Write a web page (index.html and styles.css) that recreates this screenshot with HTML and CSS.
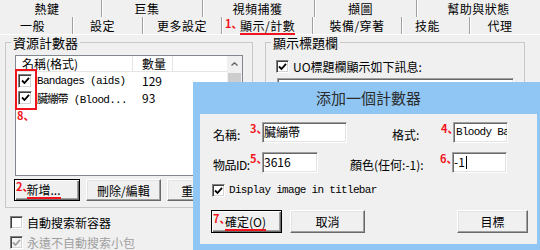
FILE: index.html
```html
<!DOCTYPE html>
<html lang="zh-Hant">
<head>
    <meta charset="UTF-8">
    <meta name="viewport" content="width=device-width, initial-scale=1.0">
    <title>資源計數器</title>
    <link rel="stylesheet" href="styles.css">
</head>
<body>
    <div class="tab-row back">
        <div class="tab t-hotkey">熱鍵</div>
        <div class="tab t-macro">巨集</div>
        <div class="tab t-video">視頻捕獲</div>
        <div class="tab t-shot">擷圖</div>
        <div class="tab t-help">幫助與狀態</div>
    </div>
    <div class="tab-row front">
        <div class="tab t-general">一般</div>
        <div class="tab t-settings">設定</div>
        <div class="tab t-more">更多設定</div>
        <div class="tab t-display"><span class="mark m-tab">1<span class="dun">、</span></span><span class="hl">顯示/計數</span></div>
        <div class="tab t-equip">裝備/穿著</div>
        <div class="tab t-skills">技能</div>
        <div class="tab t-agents">代理</div>
    </div>

    <div class="panel">
        <div class="groups">
            <fieldset class="group counters">
                <legend>資源計數器</legend>
                <div class="group-body">
                    <div class="list">
                        <div class="list-main">
                            <div class="list-head">
                                <span class="col-name">名稱(格式)</span>
                                <span class="col-qty">數量</span>
                            </div>
                            <div class="list-row">
                                <span class="col-name">
                                    <span class="box box-list"><svg viewBox="0 0 9 9" width="9" height="9"><polyline points="1,4.5 3.5,7 8,1.8" /></svg></span>
                                    <span class="mono">Bandages (aids)</span>
                                </span>
                                <span class="col-qty">129</span>
                            </div>
                            <div class="list-row">
                                <span class="col-name">
                                    <span class="box box-list"><svg viewBox="0 0 9 9" width="9" height="9"><polyline points="1,4.5 3.5,7 8,1.8" /></svg></span>
                                    <span class="mono">臟繃帶 (Blood...</span>
                                </span>
                                <span class="col-qty">93</span>
                            </div>
                            <div class="mark list-mark">8<span class="dun">、</span></div>
                        </div>
                        <div class="scrollbar">
                            <div class="sb-up"><svg viewBox="0 0 7 4" width="7" height="4"><polyline points="0.5,3.5 3.5,0.8 6.5,3.5" /></svg></div>
                            <div class="sb-thumb"></div>
                        </div>
                        <div class="mark-box"></div>
                    </div>
                    <div class="btn-row">
                        <button class="btn default btn-add"><span class="mark m-btn">2<span class="dun">、</span></span><span class="hl">新增...</span></button>
                        <button class="btn btn-edit">刪除/編輯</button>
                        <button class="btn btn-reset">重設</button>
                    </div>
                </div>
            </fieldset>

            <fieldset class="group titlebar">
                <legend>顯示標題欄</legend>
                <div class="group-body">
                    <div class="check-row">
                        <span class="box"><svg viewBox="0 0 9 9" width="9" height="9"><polyline points="1,4.5 3.5,7 8,1.8" /></svg></span>
                        <span>UO標題欄顯示如下訊息:</span>
                    </div>
                    <div class="field field-title"></div>
                </div>
            </fieldset>
        </div>

        <div class="options">
            <div class="check-row">
                <span class="box"></span>
                <span>自動搜索新容器</span>
            </div>
            <div class="check-row disabled">
                <span class="box"><svg viewBox="0 0 9 9" width="9" height="9"><polyline points="1,4.5 3.5,7 8,1.8" /></svg></span>
                <span>永遠不自動搜索小包</span>
            </div>
        </div>
    </div>

    <div class="dialog">
        <div class="dialog-title">添加一個計數器</div>
        <div class="dialog-body">
            <div class="form-row">
                <span class="lbl lbl-a">名稱:</span>
                <span class="mark m-field">3<span class="dun">、</span></span>
                <div class="field field-name">臟繃帶</div>
                <span class="lbl lbl-format">格式:</span>
                <span class="mark m-field2">4<span class="dun">、</span></span>
                <div class="field field-format mono">Bloody Bandages</div>
            </div>
            <div class="form-row">
                <span class="lbl lbl-a tight">物品ID:</span>
                <span class="mark m-field">5<span class="dun">、</span></span>
                <div class="field field-id">3616</div>
                <span class="lbl lbl-color">顏色(任何:-1):</span>
                <span class="mark m-field2">6<span class="dun">、</span></span>
                <div class="field field-color">-1<span class="caret"></span></div>
            </div>
            <div class="check-row dlg-check">
                <span class="box"><svg viewBox="0 0 9 9" width="9" height="9"><polyline points="1,4.5 3.5,7 8,1.8" /></svg></span>
                <span class="mono">Display image in titlebar</span>
            </div>
            <div class="dlg-buttons">
                <button class="btn default btn-ok"><span class="mark m-btn2">7<span class="dun">、</span></span><span class="hl">確定(O)</span></button>
                <button class="btn btn-cancel">取消</button>
                <button class="btn btn-target">目標</button>
            </div>
        </div>
    </div>
</body>
</html>
```

FILE: styles.css
```css
body {
    margin: 0;
    width: 540px;
    height: 250px;
    overflow: hidden;
    position: relative;
    background-color: #f0f0f0;
    font-family: "Noto Sans CJK TC", "Noto Sans", sans-serif;
    font-size: 12px;
    color: #000;
}
.mono {
    font-family: "Liberation Mono", "Noto Sans CJK TC", monospace;
    font-size: 11px;
    letter-spacing: -0.7px;
}

/* tabs */
.tab-row {
    display: flex;
    height: 17px;
    padding-left: 3px;
}
.tab {
    box-sizing: border-box;
    padding-right: 10px;
    text-align: center;
    line-height: 17px;
    letter-spacing: 0.5px;
    white-space: nowrap;
    border-right: 1px solid #a0a0a0;
    box-shadow: 1px 0 0 #fff;
}
.t-hotkey { width: 99px; }
.t-macro { width: 101px; }
.t-video { width: 112px; padding-right: 2px; }
.t-shot { width: 102px; }
.t-help { flex: 1; border-right: none; box-shadow: none; padding-right: 0; }
.t-general { width: 70px; }
.t-settings { width: 70px; }
.t-more { width: 79px; padding-right: 0; }
.t-display { width: 91px; text-align: left; padding-left: 3px; }
.t-equip { width: 89px; padding-right: 0; }
.t-skills { width: 68px; padding-right: 16px; }
.t-agents { flex: 1; border-right: none; box-shadow: none; }

/* red step numbers */
.mark {
    display: inline-block;
    color: #f2141c;
    font-family: "Noto Sans CJK SC", "Noto Sans CJK JP", sans-serif;
    font-weight: bold;
    font-size: 11px;
    line-height: 11px;
    white-space: nowrap;
    letter-spacing: 0;
}
.dun {
    letter-spacing: -7px;
}
.hl {
    display: inline-block;
    line-height: 14px;
    border-bottom: 2px solid #f2141c;
}
.m-tab {
    width: 15px;
    vertical-align: 3px;
}

/* panel and group boxes */
.panel {
    border-top: 1px solid #fff;
}
.groups {
    display: flex;
    padding-left: 5px;
}
.group {
    margin: 0;
    padding: 0;
    min-width: 0;
    box-sizing: border-box;
    border: 1px solid #c8c8c8;
}
.group legend {
    margin-left: 5px;
    padding: 0 2px;
    font-size: 13px;
    line-height: 15px;
}
.counters {
    width: 248px;
}
.counters .group-body {
    padding: 5px 9px 6px 9px;
}
.titlebar {
    width: 260px;
    margin-left: 12px;
}
.titlebar .group-body {
    padding: 7px 10px 0 10px;
}

/* list view */
.list {
    position: relative;
    display: flex;
    height: 121px;
    box-sizing: border-box;
    border: 1px solid #828790;
    background-color: #fff;
}
.list-main {
    flex: 1;
}
.list-head {
    display: flex;
    height: 15px;
    line-height: 15px;
    border-bottom: 1px solid #e5e5e5;
}
.list-head .col-name {
    padding-left: 6px;
    border-right: 1px solid #e5e5e5;
}
.list-head .col-qty {
    border-right: 1px solid #e5e5e5;
}
.col-name {
    box-sizing: border-box;
    width: 117px;
    display: flex;
    align-items: center;
    white-space: nowrap;
}
.col-qty {
    box-sizing: border-box;
    width: 40px;
    padding-left: 9px;
}
.list-row {
    display: flex;
    align-items: center;
    height: 17px;
}
.list-row .col-name {
    padding-left: 2px;
}
.list-row .box {
    margin-right: 5px;
}
.list-mark {
    margin: 3px 0 0 1px;
}
.mark-box {
    position: absolute;
    left: -1px;
    top: 13px;
    width: 22px;
    height: 41px;
    box-sizing: border-box;
    border: 2px solid #f2141c;
}
.scrollbar {
    width: 15px;
    background-color: #f0f0f0;
}
.sb-up {
    height: 16px;
    display: flex;
    align-items: center;
    justify-content: center;
    background-color: #f0f0f0;
}
.sb-up polyline {
    fill: none;
    stroke: #606060;
    stroke-width: 1.3;
}
.sb-thumb {
    margin: 1px 1px 0 1px;
    height: 80px;
    background-color: #cdcdcd;
}

/* checkboxes */
.box {
    flex: none;
    display: inline-flex;
    align-items: center;
    justify-content: center;
    width: 13px;
    height: 13px;
    box-sizing: border-box;
    background-color: #fff;
    border: 1px solid;
    border-color: #808080 #fff #fff #808080;
    box-shadow: inset 1px 1px 0 #404040, inset -1px -1px 0 #d4d4d4;
}
.box-list {
    width: 14px;
    height: 14px;
}
.box polyline {
    fill: none;
    stroke: #000;
    stroke-width: 1.8;
}
.check-row {
    display: flex;
    align-items: center;
    gap: 4px;
    height: 18px;
    white-space: nowrap;
}
.check-row.disabled {
    color: #a0a0a0;
}
.check-row.disabled .box {
    background-color: #f4f4f4;
}
.check-row.disabled polyline {
    stroke: #a0a0a0;
}
.options {
    padding: 4px 0 0 10px;
}
.options .check-row {
    height: 20px;
}

/* fields */
.field {
    flex: none;
    height: 21px;
    box-sizing: border-box;
    padding-left: 1px;
    line-height: 18px;
    overflow: hidden;
    white-space: nowrap;
    background-color: #fff;
    border: 1px solid;
    border-color: #a0a0a0 #fff #fff #a0a0a0;
    box-shadow: inset 1px 1px 0 #696969, inset -1px -1px 0 #e3e3e3;
}
.field-title {
    width: 237px;
    height: 22px;
    margin: 3px 0 0 1px;
}
.caret {
    display: inline-block;
    width: 1px;
    height: 13px;
    margin-left: 1px;
    vertical-align: -2px;
    background-color: #000;
}

/* buttons */
.btn {
    box-sizing: border-box;
    height: 22px;
    padding: 0;
    font-family: inherit;
    font-size: 12px;
    color: #000;
    background-color: #f0f0f0;
    border: 1px solid;
    border-color: #fff #696969 #696969 #fff;
    box-shadow: inset -1px -1px 0 #a0a0a0, inset 1px 1px 0 #e3e3e3;
    white-space: nowrap;
}
.btn.default {
    border: 1px solid #000;
    box-shadow: inset 1px 1px 0 #fff, inset -1px -1px 0 #696969, inset -2px -2px 0 #a0a0a0;
    text-align: left;
    padding-left: 1px;
}
.btn-row {
    display: flex;
    gap: 6px;
    margin: 3px 0 0 -1px;
}
.btn-add { width: 67px; }
.btn-edit { width: 77px; }
.btn-reset { width: 77px; text-align: left; padding-left: 13px; }
.m-btn {
    vertical-align: 4px;
}

/* dialog */
.dialog {
    position: absolute;
    left: 193px;
    top: 82px;
    width: 354px;
    box-sizing: border-box;
    padding: 0 10px 8px 7px;
    background-color: #8fc6f4;
}
.dialog-title {
    height: 32px;
    line-height: 32px;
    text-align: center;
    font-size: 15px;
    color: #2b2b2b;
}
.dialog-body {
    height: 130px;
    box-sizing: border-box;
    padding: 8px 9px 0 11px;
    background-color: #f0f0f0;
}
.form-row {
    display: flex;
    align-items: center;
    height: 21px;
    padding-left: 2px;
}
.form-row + .form-row {
    margin-top: 9px;
}
.lbl {
    flex: none;
    padding-top: 3px;
    white-space: nowrap;
}
.lbl-a { width: 37px; }
.lbl-a.tight { letter-spacing: -0.5px; }
.lbl-format { width: 49px; margin-left: 45px; }
.lbl-color { width: 90px; margin-left: 32px; }
.m-field {
    width: 12px;
    align-self: flex-start;
    margin-top: 1px;
}
.m-field2 {
    width: 12px;
    align-self: flex-start;
    margin-top: 1px;
}
.field-name { width: 85px; }
.field-format { width: 55px; padding-left: 2px; }
.field-id { width: 56px; }
.field-color { width: 55px; }
.dlg-check {
    margin-top: 8px;
    padding-left: 1px;
}
.dlg-buttons {
    display: flex;
    margin-top: 11px;
}
.dlg-buttons .btn {
    height: 23px;
}
.btn-ok { width: 71px; }
.btn-cancel { width: 75px; margin-left: 8px; }
.btn-target { width: 71px; margin-left: auto; }
.m-btn2 {
    width: 12px;
    vertical-align: 4px;
}
```
